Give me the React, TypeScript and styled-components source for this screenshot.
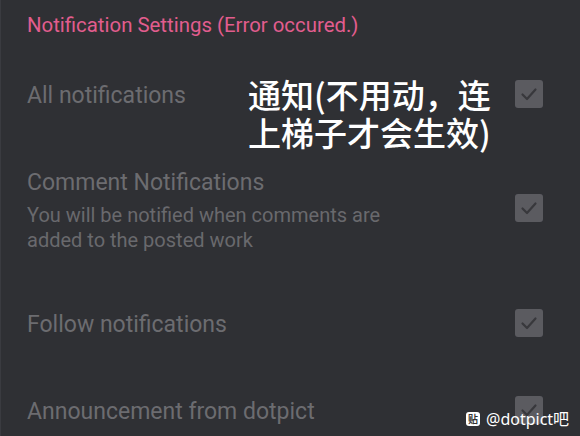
import styled, { createGlobalStyle } from "styled-components";

const GlobalStyle = createGlobalStyle`
  html, body {
    margin: 0;
    padding: 0;
    background: #2f3034;
  }
  body {
    font-family: Roboto, "Noto Sans", "Noto Sans CJK SC", sans-serif;
  }
`;

interface SettingItem {
  title: string;
  description?: string;
  height: number;
}

const settings: SettingItem[] = [
  { title: "All notifications", height: 84 },
  {
    title: "Comment Notifications",
    description: "You will be notified when comments are added to the posted work",
    height: 144,
  },
  { title: "Follow notifications", height: 86 },
  { title: "Announcement from dotpict", height: 88 },
];

const Screen = styled.div`
  position: relative;
  width: 580px;
  height: 436px;
  overflow: hidden;
  background: #2f3034;
  border-left: 1px solid #3a3b40;
  box-sizing: border-box;
`;

const Header = styled.div`
  padding: 11px 0 0 26px;
  height: 52px;
  box-sizing: border-box;
  color: #e25d8e;
  font-size: 20.4px;
  line-height: 28px;
`;

const List = styled.div`
  display: flex;
  flex-direction: column;
`;

const Row = styled.div<{ $height: number }>`
  display: flex;
  align-items: center;
  justify-content: space-between;
  height: ${(p) => p.$height}px;
  padding: 0 37px 0 26px;
  box-sizing: border-box;
`;

const TextBlock = styled.div`
  display: flex;
  flex-direction: column;
  max-width: 400px;
  margin-top: 4px;
`;

const Title = styled.div`
  color: #6c6c70;
  font-size: 23px;
  line-height: 30px;
`;

const Description = styled.div`
  color: #69696d;
  font-size: 20px;
  line-height: 25px;
  margin-top: 5px;
`;

const CheckBox = styled.div`
  flex: none;
  width: 28px;
  height: 28px;
  border-radius: 3px;
  background: #5b5b60;
  display: flex;
  align-items: center;
  justify-content: center;
`;

const Annotation = styled.div`
  position: absolute;
  left: 247px;
  top: 75px;
  width: 252px;
  color: #ffffff;
  font-family: "Noto Sans CJK SC", sans-serif;
  font-size: 33px;
  font-weight: 500;
  line-height: 38px;
`;

const Watermark = styled.div`
  position: absolute;
  left: 465px;
  top: 408px;
  display: flex;
  align-items: center;
  gap: 6px;
  color: #ffffff;
  font-family: "Noto Sans", "Noto Sans CJK SC", sans-serif;
  font-size: 16px;
  line-height: 22px;
`;

const Badge = styled.span`
  width: 14px;
  height: 14px;
  border-radius: 3px;
  background: #ffffff;
  color: #333333;
  font-family: "Noto Sans CJK SC", sans-serif;
  font-size: 10px;
  line-height: 14px;
  text-align: center;
  font-weight: bold;
`;

const Check = () => (
  <svg width="20" height="20" viewBox="0 0 20 20">
    <path d="M3.5 10.5 L8 15 L16.5 5.5" fill="none" stroke="#38383c" strokeWidth="2.2" strokeLinecap="round" strokeLinejoin="round" />
  </svg>
);

export default function App() {
  return (
    <Screen>
      <GlobalStyle />
      <Header>Notification Settings (Error occured.)</Header>
      <List>
        {settings.map((s) => (
          <Row key={s.title} $height={s.height}>
            <TextBlock>
              <Title>{s.title}</Title>
              {s.description && <Description>{s.description}</Description>}
            </TextBlock>
            <CheckBox>
              <Check />
            </CheckBox>
          </Row>
        ))}
      </List>
      <Annotation>通知(不用动，连上梯子才会生效)</Annotation>
      <Watermark>
        <Badge>贴</Badge>
        @dotpict吧
      </Watermark>
    </Screen>
  );
}
